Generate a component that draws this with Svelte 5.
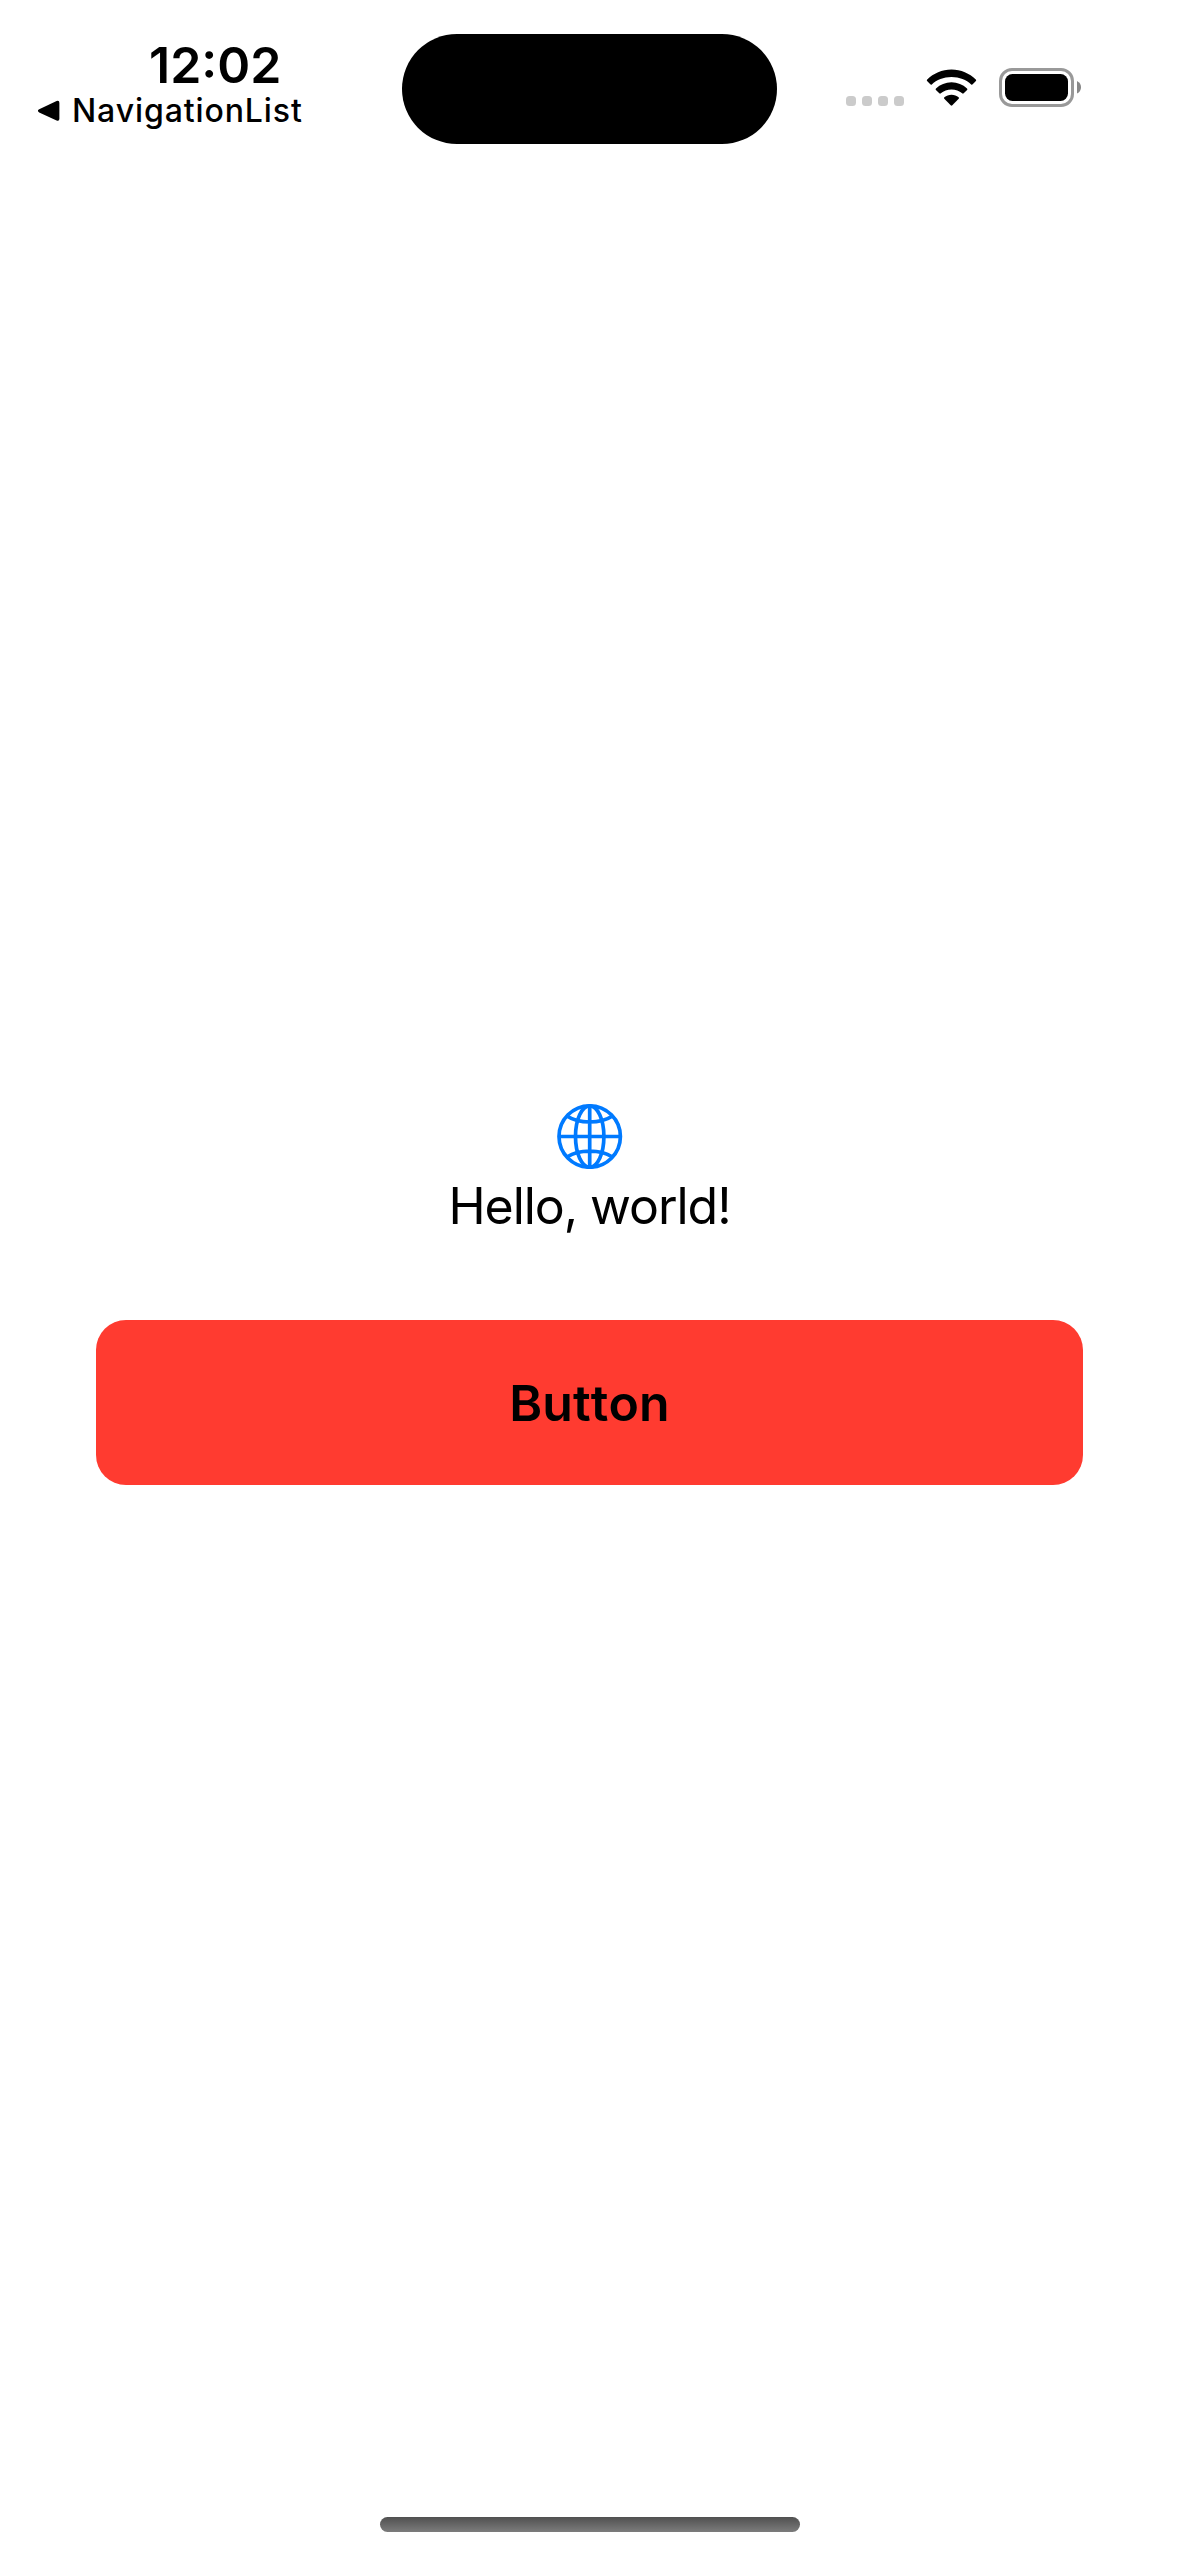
<script>
  const signalDots = [0, 1, 2, 3];
</script>

<div class="screen">
  <header class="status">
    <div class="left">
      <div class="time">12:02</div>
      <div class="back">
        <svg class="arrow" width="22" height="22" viewBox="0 0 22 22">
          <path d="M1.2 9.2 L18.6 1 Q21.4 0 21.4 3 V18.6 Q21.4 21.6 18.6 20.6 L1.2 12.4 Q-1.4 10.8 1.2 9.2Z" />
        </svg>
        <span class="app-name">NavigationList</span>
      </div>
    </div>
    <div class="island"></div>
    <div class="right">
      <div class="dots">
        {#each signalDots as dot (dot)}
          <i></i>
        {/each}
      </div>
      <svg class="wifi" width="51" height="38" viewBox="0 0 51 38">
        <path d="M25.5 8.1 C33.5 8.1 40.3 11.1 45.2 15.4 Q46 16 46.7 15.3 L49.9 12 Q50.6 11.2 49.8 10.4 C43.5 4.3 35 .4 25.5 .4 S7.5 4.3 1.2 10.4 Q.4 11.2 1.1 12 L4.3 15.3 Q5 16 5.8 15.4 C10.7 11.1 17.5 8.1 25.5 8.1Z" />
        <path d="M25.5 20.4 C29.7 20.4 33.3 21.9 36.2 24.3 Q37 25 37.7 24.2 L41.1 20.9 Q41.8 20.1 41 19.4 C36.8 15.7 31.5 13.3 25.5 13.3 S14.2 15.7 10 19.4 Q9.2 20.1 9.9 20.9 L13.3 24.2 Q14 25 14.8 24.3 C17.7 21.9 21.3 20.4 25.5 20.4Z" />
        <path d="M25.5 25.8 C28.3 25.8 30.7 26.7 32.6 28.3 Q33.4 29 32.7 29.8 L26.3 36.3 Q25.5 37 24.7 36.3 L18.3 29.8 Q17.6 29 18.4 28.3 C20.3 26.7 22.7 25.8 25.5 25.8Z" />
      </svg>
      <svg class="battery" width="83" height="39" viewBox="0 0 83 39">
        <rect x="1.5" y="1.5" width="72" height="36" rx="11.5" fill="none" stroke="#999" stroke-width="3" />
        <rect x="6" y="6" width="63" height="27" rx="7.5" />
        <path d="M78 13 Q82 15 82 19.3 Q82 23.6 78 25.6Z" fill="#888" />
      </svg>
    </div>
  </header>

  <main>
    <svg class="globe" width="66" height="66" viewBox="-32.7 -33.5 66 66">
      <circle r="30.7" />
      <ellipse rx="14.2" ry="30.7" />
      <path d="M0 -31V31M-31 0H31M-22.3 -20.3C-11 -12.6 11 -12.6 22.3 -20.3M-22.3 20.3C-11 12.6 11 12.6 22.3 20.3" />
    </svg>
    <p class="hello">Hello, world!</p>
    <button>Button</button>
  </main>

  <footer><div class="home"></div></footer>
</div>

<style>
  :global(body) {
    background: #fff;
  }
  .screen {
    width: 1179px;
    height: 2556px;
    display: flex;
    flex-direction: column;
    overflow: hidden;
    background: #fff;
    color: #000;
    font-family: Inter, "Liberation Sans", sans-serif;
  }
  .status {
    display: grid;
    grid-template-columns: 402px 375px 402px;
    height: 177px;
    flex: none;
  }
  .left {
    padding: 35px 0 0 38px;
  }
  .time {
    height: 60px;
    padding-left: 111px;
    font-size: 50px;
    line-height: 60px;
    font-weight: 600;
  }
  .back {
    display: flex;
    align-items: center;
    gap: 12px;
    height: 32px;
  }
  .app-name {
    font-size: 32px;
    line-height: 32px;
    font-weight: 500;
    letter-spacing: 0.9px;
    white-space: nowrap;
  }
  .island {
    height: 110.4px;
    margin-top: 33.6px;
    border-radius: 56px;
    background: #000;
  }
  .right {
    display: flex;
    align-items: flex-start;
    padding: 68px 0 0 69px;
  }
  .dots {
    display: flex;
    gap: 6px;
    padding-top: 28px;
  }
  .dots i {
    width: 10px;
    height: 10px;
    border-radius: 3.5px;
    background: #cbcbcb;
  }
  .wifi {
    margin: 1px 22px 0;
  }
  main {
    flex: 1;
    display: flex;
    flex-direction: column;
    align-items: center;
    padding: 926px 96px 0;
  }
  .globe {
    flex: none;
    fill: none;
    stroke: #007aff;
    stroke-width: 3.7;
  }
  .hello {
    margin: 7px 0 0;
    font-size: 50px;
    line-height: 60px;
    letter-spacing: -1.05px;
    white-space: nowrap;
  }
  button {
    width: 987px;
    height: 165px;
    margin: 84px 0 0;
    padding: 0;
    border: 0;
    border-radius: 30px;
    background: #ff3b30;
    color: #000;
    font: 600 50px/60px Inter, "Liberation Sans", sans-serif;
    font-variant-ligatures: none;
    font-kerning: none;
    letter-spacing: 0.1px;
  }
  footer {
    display: flex;
    justify-content: center;
    height: 39px;
    flex: none;
  }
  .home {
    width: 420px;
    height: 15px;
    margin-left: 1px;
    border-radius: 8px;
    background: linear-gradient(#505050, #7c7c7c);
  }
</style>
